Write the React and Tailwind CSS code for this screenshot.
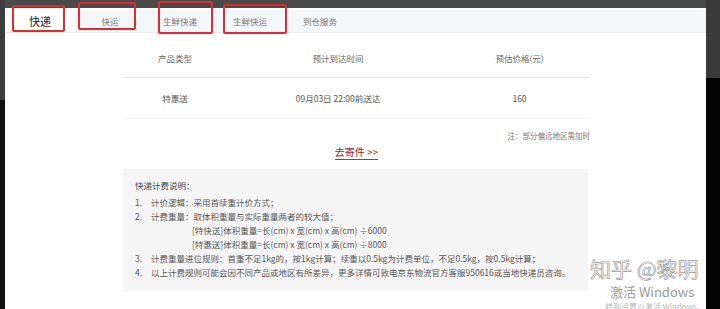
const tabs = ["快递", "快运", "生鲜快递", "生鲜快运", "到仓服务"];

// red highlight boxes drawn over the tab bar
const marks = [
  "left-[12px] top-[5px] w-[53px] h-[27px]",
  "left-[78px] top-[2px] w-[58px] h-[28px]",
  "left-[158px] top-[1px] w-[55px] h-[33px]",
  "left-[223px] top-[4px] w-[64px] h-[30px]",
];

const font = { fontFamily: '"Noto Sans CJK SC", "Noto Sans", sans-serif' };

export default function App() {
  return (
    <div className="relative flex h-[309px] w-[720px] overflow-hidden bg-[#4a4a4a]" style={font}>
      <div className="flex w-[5px] flex-col">
        <div className="h-[100px] bg-[#3c3c3c]" />
        <div className="flex-1 bg-[#111]" />
      </div>

      <div className="mt-[8px] flex w-[701px] flex-col bg-white pt-[2px]">
        {/* tabs */}
        <div className="flex h-[23px] border-b border-[#e6eaec] bg-[#f4f7f9]">
          {tabs.map((t, i) => (
            <div
              key={t}
              className={`flex w-[70px] items-center justify-center ${
                i === 0 ? "bg-white text-[11px] text-[#222]" : "text-[8.5px] text-[#777]"
              }`}
            >
              {t}
            </div>
          ))}
        </div>

        {/* table */}
        <div className="ml-[118px] w-[467px]">
          <div className="mt-[6px] grid h-[39px] grid-cols-[104px_222px_141px] items-center border-b border-[#e2e2e2] text-center text-[8.5px] text-[#666]">
            <span>产品类型</span>
            <span>预计到达时间</span>
            <span>预估价格(元)</span>
          </div>
          <div className="grid h-[41px] grid-cols-[104px_222px_141px] items-center border-b border-[#f3f3f3] text-center text-[8.5px] text-[#555]">
            <span>特惠送</span>
            <span>09月03日 22:00前送达</span>
            <span>160</span>
          </div>
          <div className="mt-[11px] text-right text-[7.5px] leading-[12px] text-[#777]">注：部分偏远地区需加时</div>
          <div className="mt-[3px] text-center text-[10px] leading-[14px]">
            <span className="border-b border-[#a33] text-[#9b2335]">去寄件 &gt;&gt;</span>
          </div>
        </div>

        {/* pricing notes */}
        <div className="ml-[118px] mt-[10px] w-[465px] bg-[#f5f5f5] pb-[12px] pl-[12px] pt-[9px] text-[8.5px] leading-[14px] text-[#555]">
          <div className="mb-[3px] text-[#444]">快递计费说明：</div>
          <div className="flex">
            <span className="w-[16px]">1.</span>
            <span>计价逻辑：采用首续重计价方式；</span>
          </div>
          <div className="flex">
            <span className="w-[16px]">2.</span>
            <span>计费重量：取体积重量与实际重量两者的较大值；</span>
          </div>
          <div className="pl-[57px]">[特快送]体积重量=长(cm) x 宽(cm) x 高(cm) ÷6000</div>
          <div className="pl-[57px]">[特惠送]体积重量=长(cm) x 宽(cm) x 高(cm) ÷8000</div>
          <div className="flex">
            <span className="w-[16px]">3.</span>
            <span>计费重量进位规则：首重不足1kg的，按1kg计算；续重以0.5kg为计费单位，不足0.5kg，按0.5kg计算；</span>
          </div>
          <div className="flex">
            <span className="w-[16px]">4.</span>
            <span>以上计费规则可能会因不同产品或地区有所差异，更多详情可致电京东物流官方客服950616或当地快递员咨询。</span>
          </div>
        </div>
      </div>

      <div className="flex w-[14px] flex-col">
        <div className="h-[78px] bg-[#3a3a3a]" />
        <div className="flex-1 bg-[#050505]" />
      </div>

      {marks.map((m) => (
        <div key={m} className={`absolute rounded-[2px] border-2 border-[#e02b2b] ${m}`} />
      ))}

      {/* watermarks */}
      <div className="absolute left-[590px] top-[255px] text-[21px] leading-[26px] text-white [-webkit-text-stroke:0.7px_#9c9c9c]">
        知乎 @黎明
      </div>
      <div className="absolute left-[610px] top-[284px] text-[13px] leading-[15px] text-[#9a9a9a]">激活 Windows</div>
      <div className="absolute left-[605px] top-[302px] text-[8px] leading-[10px] text-[#b5b5b5]">转到设置以激活 Windows。</div>
    </div>
  );
}
